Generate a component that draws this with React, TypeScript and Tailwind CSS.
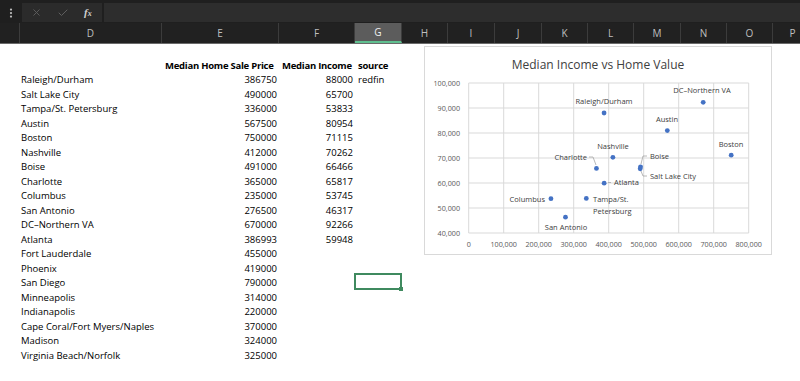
import { X, Check, EllipsisVertical } from "lucide-react";

const cols = [
  { id: "D", w: 142 },
  { id: "E", w: 117 },
  { id: "F", w: 76 },
  { id: "G", w: 47 },
  { id: "H", w: 46 },
  { id: "I", w: 47 },
  { id: "J", w: 47 },
  { id: "K", w: 46 },
  { id: "L", w: 46 },
  { id: "M", w: 47 },
  { id: "N", w: 46 },
  { id: "O", w: 46 },
  { id: "P", w: 40 },
];

type Row = { city: string; price: number; income?: number; source?: string };

const rows: Row[] = [
  { city: "Raleigh/Durham", price: 386750, income: 88000, source: "redfin" },
  { city: "Salt Lake City", price: 490000, income: 65700 },
  { city: "Tampa/St. Petersburg", price: 336000, income: 53833 },
  { city: "Austin", price: 567500, income: 80954 },
  { city: "Boston", price: 750000, income: 71115 },
  { city: "Nashville", price: 412000, income: 70262 },
  { city: "Boise", price: 491000, income: 66466 },
  { city: "Charlotte", price: 365000, income: 65817 },
  { city: "Columbus", price: 235000, income: 53745 },
  { city: "San Antonio", price: 276500, income: 46317 },
  { city: "DC\u2013Northern VA", price: 670000, income: 92266 },
  { city: "Atlanta", price: 386993, income: 59948 },
  { city: "Fort Lauderdale", price: 455000 },
  { city: "Phoenix", price: 419000 },
  { city: "San Diego", price: 790000 },
  { city: "Minneapolis", price: 314000 },
  { city: "Indianapolis", price: 220000 },
  { city: "Cape Coral/Fort Myers/Naples", price: 370000 },
  { city: "Madison", price: 324000 },
  { city: "Virginia Beach/Norfolk", price: 325000 },
];

// chart geometry, relative to the chart box
const px = (v: number) => 43.7 + (v / 100000) * 35;
const py = (v: number) => 186 - ((v - 40000) / 10000) * 25;

function FormulaBar() {
  return (
    <div className="flex h-[23px] items-stretch bg-[#1f1f1f] pt-[3px] pb-[1px]">
      <div className="flex w-[22px] items-center justify-center text-[#bdbdbd]">
        <EllipsisVertical size={12} strokeWidth={2.5} />
      </div>
      <div className="flex w-[80px] items-center bg-[#2b2b2b] pl-[9px]">
        <X size={11} className="text-[#5f5f5f]" strokeWidth={2} />
        <Check size={12} className="ml-[15px] text-[#5f5f5f]" strokeWidth={2} />
        <span className="ml-[15px] font-['Liberation_Serif',serif] text-[11px] font-bold italic leading-none text-[#d0d0d0]">
          f<span className="text-[8px]">x</span>
        </span>
      </div>
      <div className="w-[2px]" />
      <div className="flex-1 bg-[#2d2d2d]" />
    </div>
  );
}

function ColumnHeaders() {
  return (
    <div className="flex h-[21px] border-b border-[#6a6a6a] bg-[#212121] text-[10px] text-[#bfbfbf]">
      <div className="w-[20px] shrink-0 border-r border-[#3c3c3c]" />
      {cols.map((c) => (
        <div
          key={c.id}
          style={{ width: c.w }}
          className={
            c.id === "G"
              ? "flex shrink-0 items-center justify-center border-b-2 border-r border-b-[#5fbf8f] border-r-[#3c3c3c] bg-[#5c5c5c] text-[#f0f0f0]"
              : "flex shrink-0 items-center justify-center border-r border-[#3c3c3c]"
          }
        >
          {c.id}
        </div>
      ))}
    </div>
  );
}

function Sheet() {
  return (
    <div className="font-['Open_Sans',sans-serif] text-[9.5px] whitespace-nowrap text-black">
      <div className="h-[14.5px]" />
      <div className="flex h-[14.5px] items-center font-bold tracking-[-0.25px]">
        <div className="w-[20px] shrink-0" />
        <div className="w-[142px] shrink-0" />
        <div className="w-[117px] shrink-0 pl-[3px]">Median Home Sale Price</div>
        <div className="w-[76px] shrink-0 pl-[3px]">Median Income</div>
        <div className="w-[47px] shrink-0 pl-[3px]">source</div>
      </div>
      {rows.map((r) => (
        <div key={r.city} className="flex h-[14.5px] items-center">
          <div className="w-[20px] shrink-0" />
          <div className="w-[142px] shrink-0 pl-[1px]">{r.city}</div>
          <div className="w-[117px] shrink-0 pr-[2px] text-right">{r.price}</div>
          <div className="w-[76px] shrink-0 pr-[2px] text-right">{r.income ?? ""}</div>
          <div className="relative flex h-full w-[47px] shrink-0 items-center pl-[3px]">
            {r.source}
            {r.city === "San Diego" && (
              <div className="absolute -top-[3px] -left-[1px] h-[17px] w-[48px] border-2 border-[#3f8a5f]">
                <div className="absolute -right-[3px] -bottom-[3px] h-[4px] w-[4px] bg-[#3f8a5f]" />
              </div>
            )}
          </div>
        </div>
      ))}
    </div>
  );
}

const labels: { t: string; x: number; y: number; a: "start" | "middle" | "end" }[] = [
  { t: "Raleigh/Durham", x: 179, y: 54, a: "middle" },
  { t: "DC\u2013Northern VA", x: 277, y: 43, a: "middle" },
  { t: "Austin", x: 242, y: 72, a: "middle" },
  { t: "Boston", x: 306, y: 97, a: "middle" },
  { t: "Nashville", x: 188, y: 99, a: "middle" },
  { t: "Charlotte", x: 162, y: 110, a: "end" },
  { t: "Boise", x: 225, y: 109, a: "start" },
  { t: "Salt Lake City", x: 225, y: 129, a: "start" },
  { t: "Atlanta", x: 189, y: 135, a: "start" },
  { t: "Columbus", x: 120, y: 152, a: "end" },
  { t: "Tampa/St.", x: 168, y: 152, a: "start" },
  { t: "Petersburg", x: 168, y: 164, a: "start" },
  { t: "San Antonio", x: 141, y: 180, a: "middle" },
];

function Chart() {
  const xs = [0, 1, 2, 3, 4, 5, 6, 7, 8];
  const ys = [4, 5, 6, 7, 8, 9, 10];
  const pts = rows.filter((r) => r.income !== undefined);
  return (
    <div className="absolute top-[46px] left-[424px] h-[209px] w-[348px] border border-[#d9d9d9] bg-white">
      <svg width="348" height="209" viewBox="0 0 348 209" className="font-['Open_Sans',sans-serif]">
        <text x="173" y="22" textAnchor="middle" fontSize="12" fill="#404040">
          Median Income vs Home Value
        </text>
        {xs.map((i) => (
          <line key={"vx" + i} x1={px(i * 100000)} x2={px(i * 100000)} y1={py(100000)} y2={py(40000)} stroke="#d9d9d9" strokeWidth="1" />
        ))}
        {ys.map((i) => (
          <line key={"hy" + i} x1={px(0)} x2={px(800000)} y1={py(i * 10000)} y2={py(i * 10000)} stroke="#d9d9d9" strokeWidth="1" />
        ))}
        {ys.map((i) => (
          <text key={"ly" + i} x="35" y={py(i * 10000) + 2.5} textAnchor="end" fontSize="7.2" fill="#595959">
            {(i * 10000).toLocaleString("en-US")}
          </text>
        ))}
        {xs.map((i) => (
          <text key={"lx" + i} x={px(i * 100000)} y="199.5" textAnchor="middle" fontSize="7.2" fill="#595959">
            {(i * 100000).toLocaleString("en-US")}
          </text>
        ))}
        <g fill="none" stroke="#a6a6a6" strokeWidth="0.8">
          <polyline points="164,110 168,110 171,118" />
          <polyline points="222,109 218,109 216,117" />
          <polyline points="222,129 218,129 216,124" />
          <line x1="183" y1="135.5" x2="186" y2="135.5" />
        </g>
        {pts.map((r) => (
          <circle key={r.city} cx={px(r.price)} cy={py(r.income as number)} r="2.4" fill="#4472c4" />
        ))}
        {labels.map((l) => (
          <text key={l.t} x={l.x} y={l.y + 2.5} textAnchor={l.a} fontSize="7.5" fill="#404040">
            {l.t}
          </text>
        ))}
      </svg>
    </div>
  );
}

export default function App() {
  return (
    <div className="relative h-[381px] w-[800px] overflow-hidden bg-white font-['Open_Sans',sans-serif]">
      <FormulaBar />
      <ColumnHeaders />
      <Sheet />
      <Chart />
    </div>
  );
}
